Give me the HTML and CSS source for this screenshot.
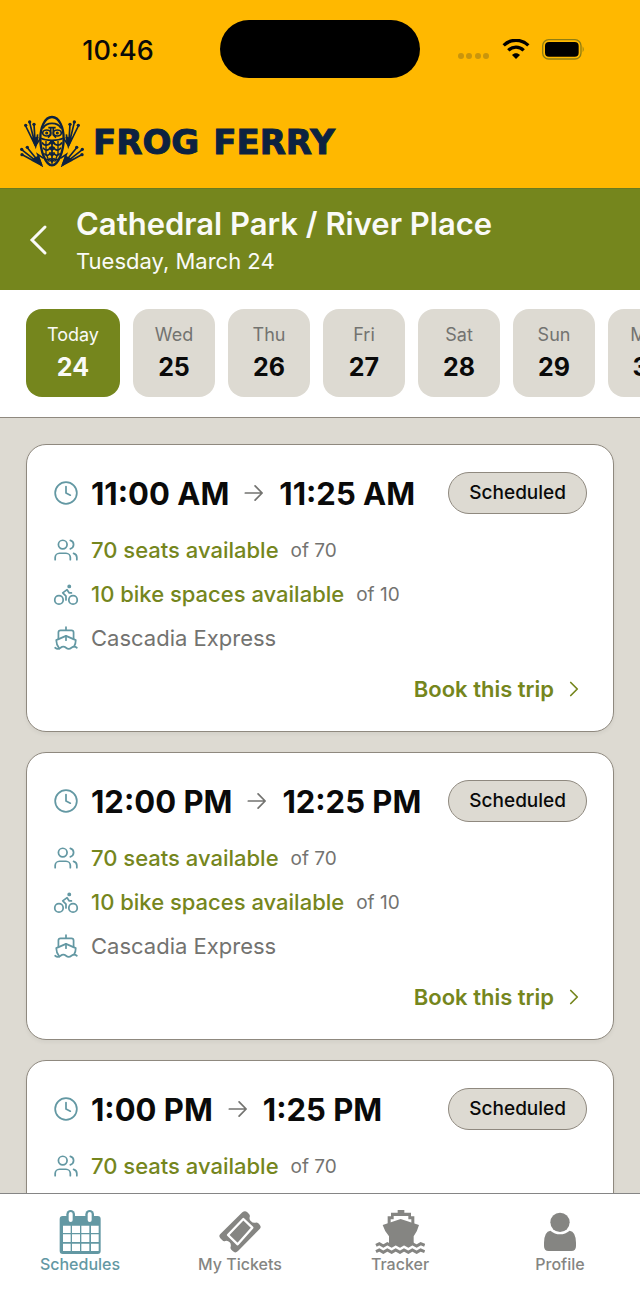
FILE: index.html
```
<!DOCTYPE html>
<html lang="en">

<head>
  <meta charset="UTF-8">
  <meta name="viewport" content="width=device-width, initial-scale=1.0">
  <title>Frog Ferry - Schedules</title>
  <link rel="stylesheet" href="styles.css">
</head>

<body>
  <!-- shared icons -->
  <svg class="sprite" aria-hidden="true">
    <symbol id="clock" viewBox="0 0 24 24">
      <circle cx="12" cy="12" r="10" />
      <path d="M12 6v6l4 2" />
    </symbol>
    <symbol id="users" viewBox="0 0 24 24">
      <path d="M16 21v-2a4 4 0 0 0-4-4H6a4 4 0 0 0-4 4v2" />
      <circle cx="9" cy="7" r="4" />
      <path d="M22 21v-2a4 4 0 0 0-3-3.87M16 3.13a4 4 0 0 1 0 7.75" />
    </symbol>
    <symbol id="bike" viewBox="0 0 24 24">
      <circle cx="18.5" cy="17.5" r="3.9" />
      <circle cx="5.5" cy="17.5" r="3.9" />
      <circle cx="15" cy="5" r="1" fill="currentColor" />
      <path d="M12 17.5V14l-3-3 4-3 2 3h2" />
    </symbol>
    <symbol id="ship" viewBox="0 0 24 24">
      <path d="M2 21c.6.5 1.2 1 2.5 1 2.5 0 2.5-2 5-2 1.3 0 1.9.5 2.5 1s1.2 1 2.5 1c2.5 0 2.5-2 5-2 1.3 0 1.9.5 2.5 1" />
      <path d="M19.38 20A11.6 11.6 0 0 0 21 14l-9-4-9 4c0 2.9.94 5.34 2.81 7.76" />
      <path d="M19 13V7a2 2 0 0 0-2-2H7a2 2 0 0 0-2 2v6M12 10v4M12 2v3" />
    </symbol>
    <symbol id="arrow" viewBox="0 0 24 24">
      <path d="M4 12h15M13 5.5l6.5 6.5-6.5 6.5" />
    </symbol>
    <symbol id="chevron" viewBox="0 0 24 24">
      <path d="m9 18 6-6-6-6" />
    </symbol>
  </svg>

  <header class="brand">
    <div class="status-bar">
      <div class="status-time">10:46</div>
      <div class="island"></div>
      <div class="status-icons">
        <svg width="32" height="6" viewBox="0 0 32 6" fill="#c9950c">
          <circle cx="3" cy="3" r="3" />
          <circle cx="11" cy="3" r="3" />
          <circle cx="20" cy="3" r="3" />
          <circle cx="28" cy="3" r="3" />
        </svg>
        <svg width="28" height="20" viewBox="0 0 84 60">
          <path d="M5 19C26-1 58-1 79 19M19 34c13-13 33-13 46 0" fill="none" stroke="#000" stroke-width="10" />
          <path d="M42 60 30 48c7-7 17-7 24 0z" />
        </svg>
        <svg width="44" height="21" viewBox="0 0 132 63">
          <rect x="2" y="2" width="115" height="58" rx="18" fill="none" stroke="#8f7d12" stroke-width="4" />
          <rect x="9" y="9" width="101" height="44" rx="12" />
          <path d="M122 22q6 9 0 18z" fill="#8f7d12" />
        </svg>
      </div>
    </div>
    <div class="logo">
      <svg width="66" height="52" viewBox="28 30 198 156" fill="none" stroke="#0d2240" stroke-width="5">
        <g id="limbs">
          <path d="M48 63 77 122 73 58M60 52l17 70M84 88l-6 34 14-22" />
          <path d="M36 134 96 181 38 149M53 128l43 53-12-33 18 12M96 181l-30-16" />
          <path d="M69 100l9 24 6-26zM72 162l24 19-10-26z" fill="#0d2240" />
          <g fill="#0d2240" stroke="none">
            <circle cx="48" cy="61" r="5" />
            <circle cx="60" cy="51" r="5" />
            <circle cx="73" cy="58" r="5" />
            <circle cx="36" cy="133" r="5" />
            <circle cx="53" cy="127" r="5" />
            <circle cx="37" cy="149" r="5" />
          </g>
        </g>
        <use href="#limbs" transform="matrix(-1 0 0 1 254 0)" />
        <path d="M127 36c-22 0-35 32-35 65 0 36 16 80 35 80s35-44 35-80c0-33-13-65-35-65z" stroke-width="7" />
        <path d="M100 70c10-20 44-20 54 0M123 68v22l-8 8M131 68v22l8 8M116 68h22" />
        <ellipse cx="111" cy="84" rx="12" ry="9" />
        <ellipse cx="143" cy="84" rx="12" ry="9" />
        <circle cx="111" cy="84" r="2" />
        <circle cx="143" cy="84" r="2" />
        <path d="M94 100c15 8 51 8 66 0M127 104v72" />
        <path d="M97 112c6 12 22 10 25 0M157 112c-6 12-22 10-25 0M100 128c6 11 19 9 22-2M154 128c-6 11-19 9-22-2M104 145c5 9 15 8 18-3M150 145c-5 9-15 8-18-3M110 161c4 6 10 5 12-2M144 161c-4 6-10 5-12-2" />
        <path d="M109 108v38l10 24M145 108v38l-10 24" stroke-width="4" />
        <g fill="#0d2240" stroke="none">
          <circle cx="127" cy="112" r="7" />
          <circle cx="127" cy="130" r="7" />
          <circle cx="127" cy="148" r="6" />
          <circle cx="127" cy="166" r="6" />
        </g>
      </svg>
      <div class="wordmark"><span>FROG</span> <span>FERRY</span></div>
    </div>
  </header>

  <div class="route">
    <button class="back" aria-label="Back">
      <svg width="20" height="32" viewBox="0 0 20 32"><path d="M17 3 4 16l13 13" /></svg>
    </button>
    <div>
      <h1>Cathedral Park / River Place</h1>
      <p>Tuesday, March 24</p>
    </div>
  </div>

  <div class="days">
    <button class="day is-active"><span>Today</span><b>24</b></button>
    <button class="day"><span>Wed</span><b>25</b></button>
    <button class="day"><span>Thu</span><b>26</b></button>
    <button class="day"><span>Fri</span><b>27</b></button>
    <button class="day"><span>Sat</span><b>28</b></button>
    <button class="day"><span>Sun</span><b>29</b></button>
    <button class="day"><span>Mon</span><b>30</b></button>
  </div>

  <main class="trips">
    <article class="card">
      <div class="card-top">
        <svg class="icon"><use href="#clock" /></svg>
        <h2>11:00 AM <svg class="icon arrow"><use href="#arrow" /></svg> 11:25 AM</h2>
        <span class="badge">Scheduled</span>
      </div>
      <ul>
        <li><svg class="icon"><use href="#users" /></svg><strong>70 seats available</strong><small>of 70</small></li>
        <li><svg class="icon"><use href="#bike" /></svg><strong>10 bike spaces available</strong><small>of 10</small></li>
        <li><svg class="icon"><use href="#ship" /></svg>Cascadia Express</li>
      </ul>
      <a class="book" href="#">Book this trip <svg class="icon"><use href="#chevron" /></svg></a>
    </article>

    <article class="card">
      <div class="card-top">
        <svg class="icon"><use href="#clock" /></svg>
        <h2>12:00 PM <svg class="icon arrow"><use href="#arrow" /></svg> 12:25 PM</h2>
        <span class="badge">Scheduled</span>
      </div>
      <ul>
        <li><svg class="icon"><use href="#users" /></svg><strong>70 seats available</strong><small>of 70</small></li>
        <li><svg class="icon"><use href="#bike" /></svg><strong>10 bike spaces available</strong><small>of 10</small></li>
        <li><svg class="icon"><use href="#ship" /></svg>Cascadia Express</li>
      </ul>
      <a class="book" href="#">Book this trip <svg class="icon"><use href="#chevron" /></svg></a>
    </article>

    <article class="card">
      <div class="card-top">
        <svg class="icon"><use href="#clock" /></svg>
        <h2>1:00 PM <svg class="icon arrow"><use href="#arrow" /></svg> 1:25 PM</h2>
        <span class="badge">Scheduled</span>
      </div>
      <ul>
        <li><svg class="icon"><use href="#users" /></svg><strong>70 seats available</strong><small>of 70</small></li>
      </ul>
    </article>
  </main>

  <nav class="tabs">
    <a class="tab is-active" href="#">
      <svg width="44" height="44" viewBox="0 0 132 132">
        <rect x="5" y="18" width="123" height="114" rx="9" />
        <rect x="25" y="0" width="26" height="42" rx="13" />
        <rect x="82" y="0" width="26" height="42" rx="13" />
        <path fill="#fff" d="M15 47h23v22H15zM42 47h24v22H42zM70 47h24v22H70zM99 47h23v22H99zM15 73h23v23H15zM42 73h24v23H42zM70 73h24v23H70zM99 73h23v23H99zM15 101h23v22H15zM42 101h24v22H42zM70 101h24v22H70zM99 101h23v22H99z" />
        <rect x="32" y="6" width="12" height="30" rx="6" fill="#fff" />
        <rect x="89" y="6" width="12" height="30" rx="6" fill="#fff" />
      </svg>
      Schedules
    </a>
    <a class="tab" href="#">
      <svg width="44" height="44" viewBox="0 0 132 132">
        <path d="M73 7q8-7 15 0l5 5q4 4 2 9-2 8 4 13 6 6 13 4 5-2 9 2l4 4q6 7 0 13L60 123q-8 8-15 1l-5-5q-4-4-2-9 2-8-3-13-6-6-13-4-5 2-9-2l-6-6q-6-7 0-13z" />
        <path d="M76 27 103 53 59 103 30 75z" fill="none" stroke="#fff" stroke-width="7" stroke-linejoin="round" />
      </svg>
      My Tickets
    </a>
    <a class="tab" href="#">
      <svg width="50" height="44" viewBox="0 0 150 132">
        <path d="M68 0h20v8h20v11h10v23h-9V28h-9V18H56v10h-9v14h-9V19h10V8h20z" />
        <path d="M77 27 132 45q-4 17-16 34v26H42V79Q28 62 23 45z" />
        <path d="M3 106l10-5 12 7 12-7 13 7 12-7 13 7 12-7 13 7 12-7 13 7 12-7 12 5M3 125l10-5 12 7 12-7 13 7 12-7 13 7 12-7 13 7 12-7 13 7 12-7 12 5" fill="none" stroke="currentColor" stroke-width="9" />
      </svg>
      Tracker
    </a>
    <a class="tab" href="#">
      <svg width="44" height="44" viewBox="0 0 132 132">
        <circle cx="66" cy="37" r="29" />
        <path d="M37 62q13 11 29 11t29-11q18 2 19 36v10q0 15-14 15H32q-14 0-14-15V98q1-34 19-36z" />
      </svg>
      Profile
    </a>
  </nav>
</body>

</html>
```

FILE: styles.css
```
* {
  margin: 0;
  padding: 0;
  box-sizing: border-box;
}

:root {
  --yellow: #ffb800;
  --green: #75861d;
  --beige: #dddad2;
  --line: #8f897f;
  --teal: #6398a3;
  --gray: #737370;
}

body {
  display: flex;
  flex-direction: column;
  height: 100vh;
  font-family: Inter, "Liberation Sans", sans-serif;
  color: #0a0a0a;
  background: #fff;
}

button {
  border: 0;
  font: inherit;
  cursor: pointer;
}

a {
  text-decoration: none;
}

svg {
  flex: none;
}

.sprite {
  position: absolute;
  width: 0;
  height: 0;
}

.icon {
  width: 26px;
  height: 26px;
  fill: none;
  stroke: currentColor;
  stroke-width: 1.6;
  stroke-linecap: round;
  stroke-linejoin: round;
  color: var(--teal);
}

/* header */
.brand {
  flex: none;
  background: var(--yellow);
}

.status-bar {
  display: grid;
  grid-template-columns: 1fr 200px 1fr;
  align-items: center;
  height: 98px;
}

.status-time {
  padding: 2px 0 0 16px;
  text-align: center;
  font-size: 27px;
  font-weight: 500;
}

.island {
  height: 58px;
  border-radius: 29px;
  background: #000;
}

.status-icons {
  display: flex;
  align-items: center;
  justify-content: center;
  gap: 12px;
  padding-right: 16px;
}

.status-icons svg:first-child {
  margin-top: 14px;
}

.logo {
  display: flex;
  align-items: center;
  gap: 8px;
  height: 90px;
  padding: 0 19px 4px;
}

.wordmark {
  display: flex;
  gap: 14px;
  padding-top: 2px;
  font-family: "DejaVu Sans", sans-serif;
  font-size: 34px;
  font-weight: 700;
  line-height: 36px;
  color: #0d2240;
  -webkit-text-stroke: 1px #0d2240;
}

.route {
  display: flex;
  flex: none;
  align-items: center;
  gap: 26px;
  height: 102px;
  padding: 4px 26px 0;
  border-top: 1px solid #6b7a20;
  color: #fafaf7;
  background: var(--green);
}

.back {
  display: flex;
  padding: 0 2px 4px;
  color: inherit;
  background: none;
}

.back svg {
  fill: none;
  stroke: currentColor;
  stroke-width: 3;
  stroke-linecap: round;
}

.route h1 {
  font-size: 31px;
  font-weight: 600;
  line-height: 38px;
}

.route p {
  font-size: 22px;
  line-height: 36px;
}

/* day picker */
.days {
  display: flex;
  flex: none;
  gap: 13px;
  height: 128px;
  padding: 19px 26px;
  border-bottom: 1px solid var(--line);
  overflow-x: auto;
  scrollbar-width: none;
}

.day {
  display: flex;
  flex: none;
  flex-direction: column;
  align-items: center;
  justify-content: center;
  width: 82px;
  height: 88px;
  border-radius: 16px;
  color: #0a0a0a;
  background: var(--beige);
}

.day span {
  font-size: 18px;
  line-height: 28px;
  color: var(--gray);
}

.day b {
  font-size: 25px;
  font-weight: 700;
  line-height: 36px;
}

.day.is-active {
  width: 94px;
  background: var(--green);
}

.day.is-active span,
.day.is-active b {
  color: #fafaf7;
}

/* trips */
.trips {
  display: flex;
  flex: 1;
  flex-direction: column;
  gap: 20px;
  min-height: 0;
  padding: 26px 26px 0;
  background: var(--beige);
  overflow-y: auto;
  scrollbar-width: none;
}

.card {
  display: flex;
  flex: none;
  flex-direction: column;
  padding: 27px 26px;
  border: 1px solid var(--line);
  border-radius: 20px;
  background: #fff;
  box-shadow: 0 2px 4px rgba(0, 0, 0, .05);
}

.card-top {
  display: flex;
  align-items: center;
  gap: 12px;
  height: 42px;
}

.card h2 {
  display: flex;
  flex: 1;
  align-items: center;
  gap: 12px;
  font-size: 31px;
  font-weight: 700;
  white-space: nowrap;
}

.icon.arrow {
  color: var(--gray);
}

.badge {
  padding: 0 20px;
  border: 1px solid var(--line);
  border-radius: 21px;
  font-size: 19px;
  font-weight: 500;
  line-height: 40px;
  background: var(--beige);
}

.card ul {
  display: flex;
  flex-direction: column;
  gap: 16px;
  margin: 22px 0;
  list-style: none;
}

.card li {
  display: flex;
  align-items: center;
  gap: 12px;
  height: 28px;
  font-size: 22px;
  color: var(--gray);
}

.card strong {
  font-weight: 500;
  color: var(--green);
}

.card small {
  font-size: 19px;
}

.book {
  display: flex;
  align-items: center;
  align-self: flex-end;
  gap: 7px;
  height: 30px;
  font-size: 22px;
  font-weight: 600;
  color: var(--green);
}

.book .icon {
  color: inherit;
}

/* bottom tabs */
.tabs {
  display: grid;
  flex: none;
  grid-template-columns: repeat(4, 1fr);
  height: 98px;
  padding-top: 16px;
  border-top: 1px solid #858585;
  background: #fff;
}

.tab {
  display: flex;
  flex-direction: column;
  align-items: center;
  font-size: 16px;
  font-weight: 500;
  line-height: 20px;
  color: #858582;
}

.tab svg {
  fill: currentColor;
}

.tab.is-active {
  color: var(--teal);
}
```
